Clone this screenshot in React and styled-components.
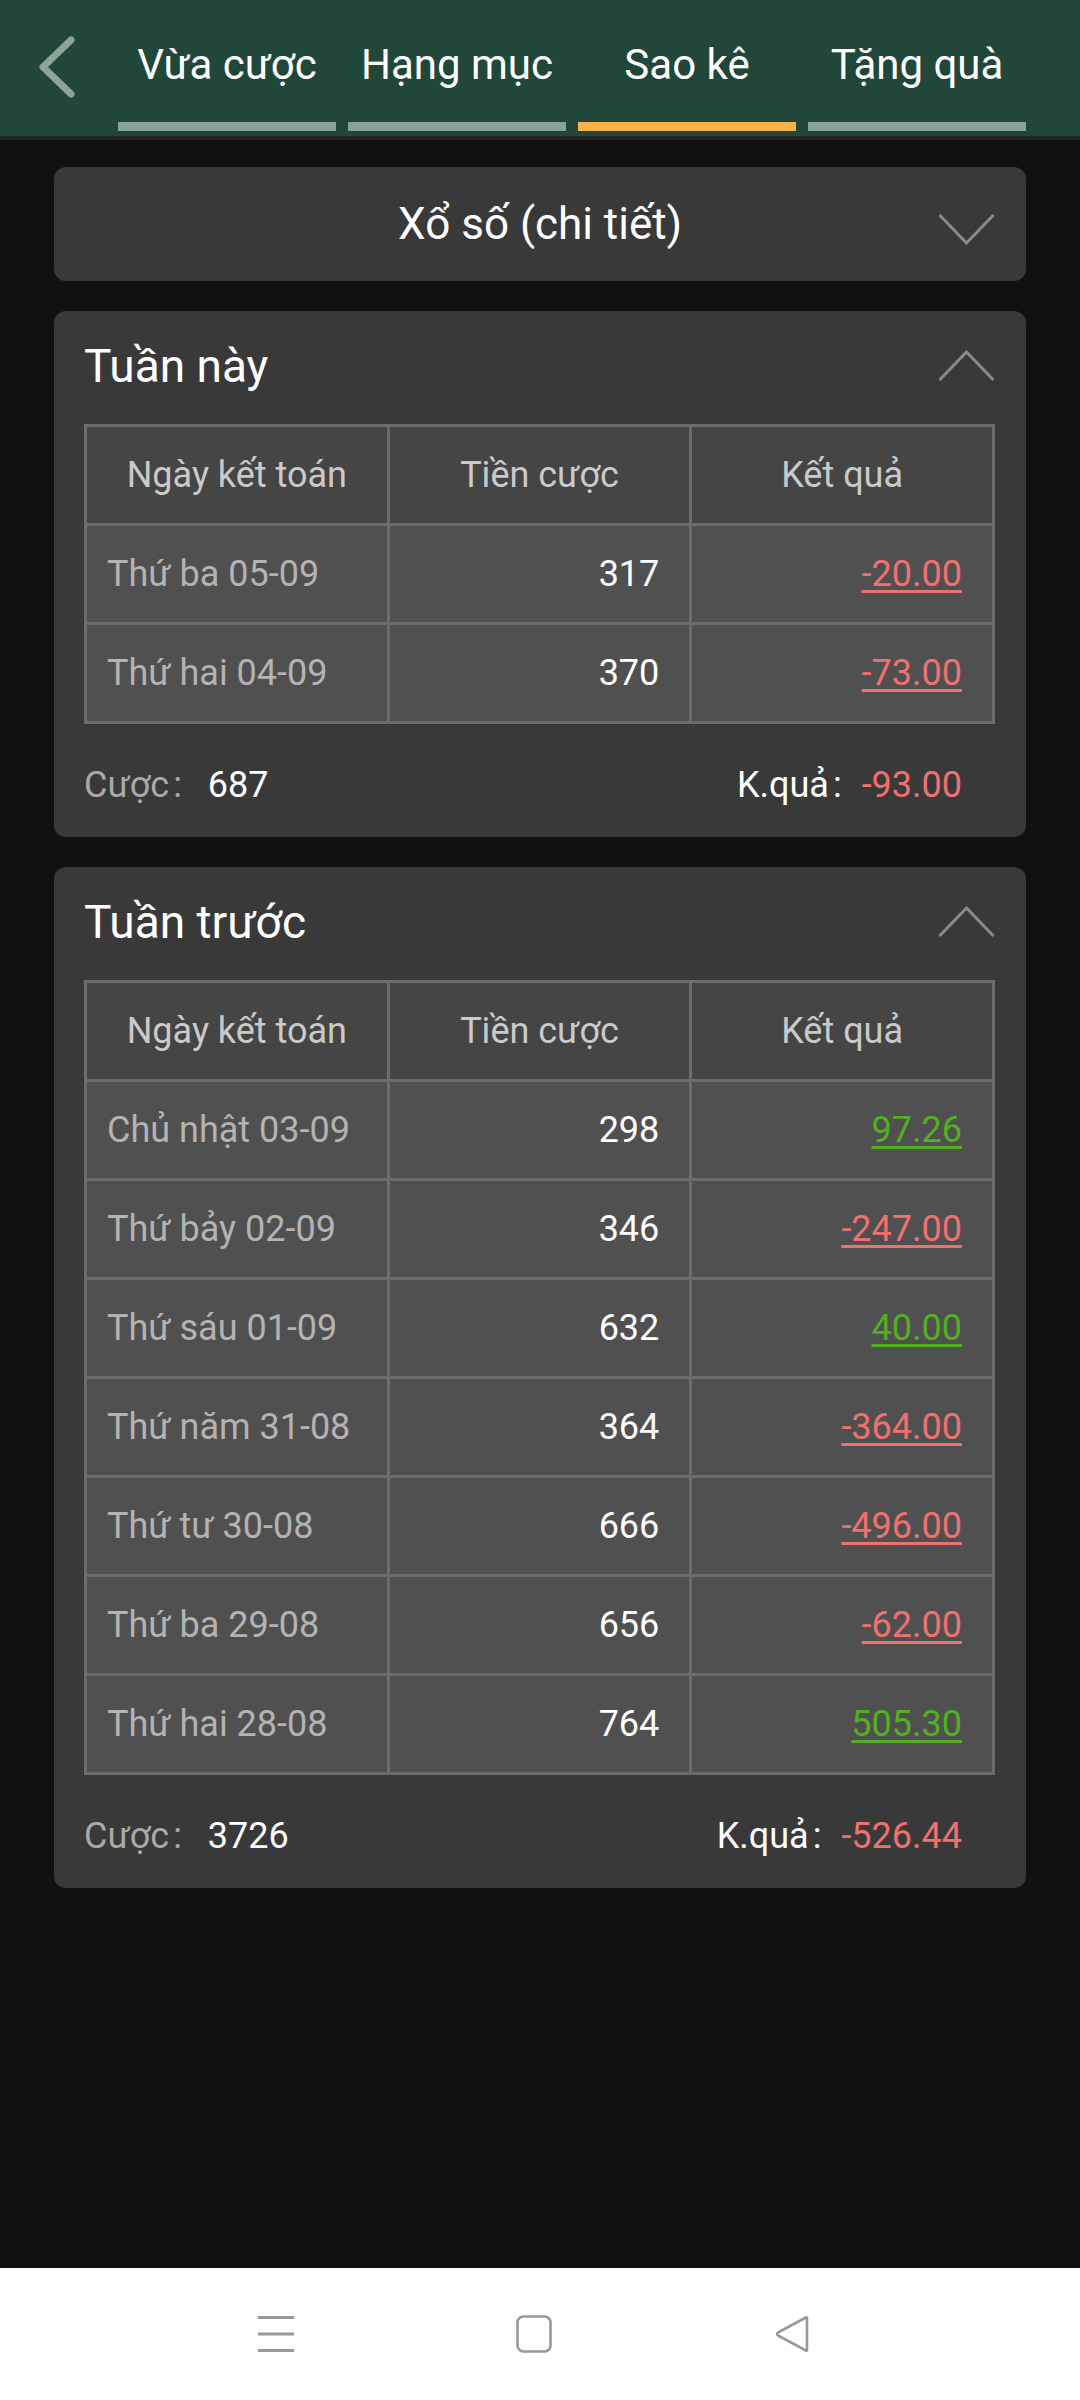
import React from "react";
import styled, { createGlobalStyle } from "styled-components";

const Global = createGlobalStyle`
  html, body { margin: 0; padding: 0; height: 100%; background: #111111; }
  body { font-family: Roboto, "Noto Sans", "Liberation Sans", sans-serif; }
  #root { height: 100%; }
  * { box-sizing: border-box; }
`;

const Page = styled.div`
  height: 100%;
  display: flex;
  flex-direction: column;
  background: #111111;
`;

const Header = styled.header`
  height: 140px;
  background: #21473a;
  border-bottom: 4px solid #232323;
  display: flex;
  align-items: stretch;
  padding-left: 36px;
`;

const BackButton = styled.div`
  width: 82px;
  display: flex;
  align-items: flex-start;
  padding-top: 34px;
`;

const Tabs = styled.nav`
  display: flex;
  gap: 12px;
`;

const Tab = styled.div`
  width: 218px;
  display: flex;
  flex-direction: column;
  align-items: stretch;
  padding-top: 40px;
  padding-bottom: 5px;
`;

const TabLabel = styled.span`
  font-size: 42px;
  color: #ffffff;
  text-align: center;
  white-space: nowrap;
  line-height: 49px;
`;

const TabBar = styled.div`
  margin-top: auto;
  height: 9px;
  background: ${(p) => (p.$active ? "#f7b24a" : "#8aa295")};
`;

const Main = styled.main`
  flex: 1;
  padding: 27px 54px 0;
  display: flex;
  flex-direction: column;
  gap: 30px;
`;

const Dropdown = styled.div`
  height: 114px;
  border-radius: 12px;
  background: #393939;
  display: flex;
  align-items: center;
  justify-content: center;
  position: relative;
`;

const DropdownLabel = styled.span`
  font-size: 44px;
  color: #ffffff;
`;

const DropdownIcon = styled.svg`
  position: absolute;
  right: 31px;
  top: 46px;
`;

const Card = styled.section`
  background: #393939;
  border-radius: 12px;
  padding: 28px 31px 31px 30px;
`;

const CardHead = styled.div`
  display: flex;
  align-items: center;
  justify-content: space-between;
`;

const CardTitle = styled.h2`
  margin: 0;
  font-size: 46px;
  font-weight: 400;
  color: #ffffff;
  line-height: 54px;
`;

const Table = styled.div`
  margin-top: 31px;
  display: grid;
  grid-template-columns: 1fr 1fr 1fr;
  gap: 3px;
  padding: 3px;
  background: #6c6c6c;
`;

const Cell = styled.div`
  height: 96px;
  display: flex;
  align-items: center;
  font-size: 36px;
  background: ${(p) => (p.$head ? "#454545" : "#505050")};
  justify-content: ${(p) => (p.$align === "center" ? "center" : p.$align === "right" ? "flex-end" : "flex-start")};
  padding: ${(p) => (p.$align === "right" ? "0 30px 0 0" : p.$align === "left" ? "0 0 0 20px" : "0")};
  color: ${(p) => p.$color || "#ffffff"};
  white-space: nowrap;
`;

const Amount = styled.span`
  color: ${(p) => (p.$positive ? "#50b01f" : "#f07070")};
  text-decoration: underline;
  text-decoration-thickness: 3px;
  text-underline-offset: 4px;
`;

const Summary = styled.div`
  margin-top: 40px;
  display: flex;
  justify-content: space-between;
  align-items: baseline;
  padding-right: 33px;
  font-size: 36px;
  line-height: 42px;
`;

const SumGroup = styled.div`
  display: flex;
  align-items: baseline;
`;

const SumLabel = styled.span`
  color: ${(p) => (p.$light ? "#ffffff" : "#a9a9a9")};
`;

const Colon = styled.span`
  margin: 0 ${(p) => (p.$light ? "20px" : "26px")} 0 4px;
  color: ${(p) => (p.$light ? "#ffffff" : "#a9a9a9")};
`;

const SumValue = styled.span`
  color: ${(p) => p.$color || "#ffffff"};
`;

const NavBar = styled.footer`
  height: 132px;
  background: #ffffff;
  display: flex;
  align-items: center;
  justify-content: center;
  gap: 222px;
  padding-right: 12px;
`;

const NavIcon = styled.svg`
  display: block;
`;

const weeks = [
  {
    title: "Tuần này",
    rows: [
      ["Thứ ba 05-09", "317", "-20.00"],
      ["Thứ hai 04-09", "370", "-73.00"],
    ],
    bet: "687",
    result: "-93.00",
  },
  {
    title: "Tuần trước",
    rows: [
      ["Chủ nhật 03-09", "298", "97.26"],
      ["Thứ bảy 02-09", "346", "-247.00"],
      ["Thứ sáu 01-09", "632", "40.00"],
      ["Thứ năm 31-08", "364", "-364.00"],
      ["Thứ tư 30-08", "666", "-496.00"],
      ["Thứ ba 29-08", "656", "-62.00"],
      ["Thứ hai 28-08", "764", "505.30"],
    ],
    bet: "3726",
    result: "-526.44",
  },
];

const tabs = ["Vừa cược", "Hạng mục", "Sao kê", "Tặng quà"];

function WeekCard({ week }) {
  return (
    <Card>
      <CardHead>
        <CardTitle>{week.title}</CardTitle>
        <svg width="57" height="32" viewBox="0 0 57 32">
          <polyline points="1.5,30 28.5,2 55.5,30" fill="none" stroke="#8a8a8a" strokeWidth="3" />
        </svg>
      </CardHead>
      <Table>
        <Cell $head $align="center" $color="#cacaca">Ngày kết toán</Cell>
        <Cell $head $align="center" $color="#cacaca">Tiền cược</Cell>
        <Cell $head $align="center" $color="#cacaca">Kết quả</Cell>
        {week.rows.map(([d, b, r]) => (
          <React.Fragment key={d}>
            <Cell $align="left" $color="#b3b3b3">{d}</Cell>
            <Cell $align="right">{b}</Cell>
            <Cell $align="right">
              <Amount $positive={!r.startsWith("-")}>{r}</Amount>
            </Cell>
          </React.Fragment>
        ))}
      </Table>
      <Summary>
        <SumGroup>
          <SumLabel>Cược</SumLabel>
          <Colon>:</Colon>
          <SumValue>{week.bet}</SumValue>
        </SumGroup>
        <SumGroup>
          <SumLabel $light>K.quả</SumLabel>
          <Colon $light>:</Colon>
          <SumValue $color="#f07070">{week.result}</SumValue>
        </SumGroup>
      </Summary>
    </Card>
  );
}

export default function App() {
  return (
    <Page>
      <Global />
      <Header>
        <BackButton>
          <svg width="40" height="66" viewBox="0 0 40 66">
            <polyline points="35,6 7,33 35,60" fill="none" stroke="#8da596" strokeWidth="7" strokeLinecap="round" strokeLinejoin="round" />
          </svg>
        </BackButton>
        <Tabs>
          {tabs.map((t, i) => (
            <Tab key={t}>
              <TabLabel>{t}</TabLabel>
              <TabBar $active={i === 2} />
            </Tab>
          ))}
        </Tabs>
      </Header>
      <Main>
        <Dropdown>
          <DropdownLabel>Xổ số (chi tiết)</DropdownLabel>
          <DropdownIcon width="57" height="32" viewBox="0 0 57 32">
            <polyline points="1.5,2 28.5,30 55.5,2" fill="none" stroke="#8a8a8a" strokeWidth="3" />
          </DropdownIcon>
        </Dropdown>
        {weeks.map((w) => (
          <WeekCard key={w.title} week={w} />
        ))}
      </Main>
      <NavBar>
        <NavIcon width="36" height="38" viewBox="0 0 36 38">
          <rect x="0" y="1" width="36" height="3" fill="#999" />
          <rect x="0" y="17.5" width="36" height="3" fill="#999" />
          <rect x="0" y="34" width="36" height="3" fill="#999" />
        </NavIcon>
        <NavIcon width="36" height="38" viewBox="0 0 36 38">
          <rect x="1.5" y="1.5" width="33" height="35" rx="6" fill="none" stroke="#999" strokeWidth="2.6" />
        </NavIcon>
        <NavIcon width="36" height="38" viewBox="0 0 36 38">
          <path d="M33 3.5 L33 34.5 Q33 37 31 35 L4 20.5 Q2 19 4 17.5 L31 3 Q33 1.5 33 3.5 Z" fill="none" stroke="#999" strokeWidth="2.6" strokeLinejoin="round" />
        </NavIcon>
      </NavBar>
    </Page>
  );
}
